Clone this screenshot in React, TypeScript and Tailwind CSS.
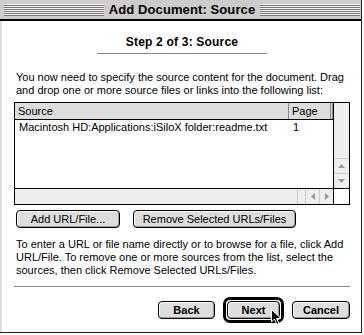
import type { ReactNode } from 'react';

const FONT = 'font-["Liberation_Sans",Arial,sans-serif]';

const stripes =
  'bg-[image:repeating-linear-gradient(to_bottom,#f4f4f4_0px,#f4f4f4_1px,#777_1px,#777_2px)]';

// クラシックMac風のボタン
const MacButton = ({
  children,
  bold,
  className = '',
}: {
  children: ReactNode;
  bold?: boolean;
  className?: string;
}) => (
  <div
    className={`flex h-[18px] items-center justify-center rounded-[4px] border border-black bg-[#dddddd] text-[11px] leading-none text-black shadow-[inset_1px_1px_0_#ffffff,inset_-1px_-1px_0_#999999] ${
      bold ? 'font-bold' : ''
    } ${className}`}
  >
    {children}
  </div>
);

const Triangle = ({ dir }: { dir: 'up' | 'down' | 'left' | 'right' }) => {
  const pts = {
    up: '0,4 3.5,0 7,4',
    down: '0,0 3.5,4 7,0',
    left: '4,0 0,3.5 4,7',
    right: '0,0 4,3.5 0,7',
  }[dir];
  const vertical = dir === 'up' || dir === 'down';
  return (
    <svg width={vertical ? 7 : 4} height={vertical ? 4 : 7} className="block">
      <polygon points={pts} fill="#999999" />
    </svg>
  );
};

export default function App() {
  return (
    <div className={`relative h-[335px] w-[364px] overflow-hidden bg-white ${FONT}`}>
      <div className="flex h-[333px] w-[362px] flex-col border-r border-b border-[#222]">
        {/* タイトルバー */}
        <div className="flex h-[19px] items-center bg-[#cccccc] pl-[4px] pr-[1px]">
          <div className={`h-[12px] flex-1 ${stripes}`} />
          <span className="px-[5px] text-[13px] font-bold leading-none tracking-[0.1px] text-black">
            Add Document: Source
          </span>
          <div className={`h-[12px] flex-1 ${stripes}`} />
        </div>
        <div className="h-[2px] bg-black" />

        {/* 本体 */}
        <div className="flex flex-1 flex-col border-l-2 border-[#dddddd] pl-[12px] pr-[11px]">
          <div className="mt-[14px] text-center text-[12px] font-bold leading-[15px] tracking-[0.2px] text-black">
            Step 2 of 3: Source
          </div>
          <div className="mx-auto mt-[3px] h-px w-[170px] bg-[#888888]" />

          <p className="mt-[17px] whitespace-nowrap pl-[2px] text-[11px] leading-[13px] text-black">
            You now need to specify the source content for the document. Drag
            <br />
            and drop one or more source files or links into the following list:
          </p>

          {/* ソースリスト */}
          <div className="mt-[5px] flex h-[103px] border border-black">
            <div className="flex flex-1 flex-col">
              <div className="flex h-[17px] border-b border-black bg-[#dddddd] text-[11px] leading-[16px] text-black">
                <div className="w-[274px] border-r border-[#888888] pl-[3px]">Source</div>
                <div className="flex-1 border-r-[3px] border-double border-[#888888] pl-[3px]">Page</div>
              </div>
              <div className="flex flex-1 bg-white text-[11px] leading-[15px] text-black">
                <div className="w-[274px] pl-[4px]">
                  Macintosh HD:Applications:iSiloX folder:readme.txt
                </div>
                <div className="pl-[4px]">1</div>
              </div>
              <div className="flex h-[16px] justify-end border-t border-black bg-[#eeeeee]">
                <div className="flex w-[8px] items-center justify-center border-l border-[#cccccc]" />
                <div className="flex w-[14px] items-center justify-center border-l border-[#cccccc]">
                  <Triangle dir="left" />
                </div>
                <div className="flex w-[14px] items-center justify-center border-l border-[#cccccc]">
                  <Triangle dir="right" />
                </div>
              </div>
            </div>
            <div className="flex w-[16px] flex-col border-l border-black">
              <div className="flex-1 bg-[#eeeeee]" />
              <div className="flex h-[15px] items-center justify-center border-t border-[#cccccc] bg-[#eeeeee]">
                <Triangle dir="up" />
              </div>
              <div className="flex h-[15px] items-center justify-center border-t border-[#cccccc] bg-[#eeeeee]">
                <Triangle dir="down" />
              </div>
              <div className="h-[16px] border-t border-black bg-white" />
            </div>
          </div>

          <div className="mt-[5px] flex gap-[13px] pl-[2px]">
            <MacButton className="w-[104px]">Add URL/File...</MacButton>
            <MacButton className="w-[163px]">Remove Selected URLs/Files</MacButton>
          </div>

          <p className="mt-[10px] whitespace-nowrap pl-[2px] text-[11px] leading-[13px] text-black">
            To enter a URL or file name directly or to browse for a file, click Add
            <br />
            URL/File. To remove one or more sources from the list, select the
            <br />
            sources, then click Remove Selected URLs/Files.
          </p>

          <div className="mt-[9px] h-px bg-[#888888]" />

          {/* 下部ボタン */}
          <div className="mt-[10px] flex items-center justify-end gap-[8px]">
            <MacButton bold className="w-[57px]">
              Back
            </MacButton>
            <div className="rounded-[7px] border-[3px] border-black p-[1px]">
              <MacButton bold className="w-[53px]">
                Next
              </MacButton>
            </div>
            <MacButton bold className="w-[58px]">
              Cancel
            </MacButton>
          </div>
        </div>
      </div>

      {/* マウスカーソル */}
      <svg width="12" height="17" viewBox="0 0 12 17" className="absolute left-[271px] top-[309px]">
        <path d="M0.5 0.5 L0.5 13 L3.5 10 L6 15.5 L8 14.5 L5.5 9.5 L10 9.5 Z" fill="black" stroke="white" strokeWidth="1" />
      </svg>
    </div>
  );
}
